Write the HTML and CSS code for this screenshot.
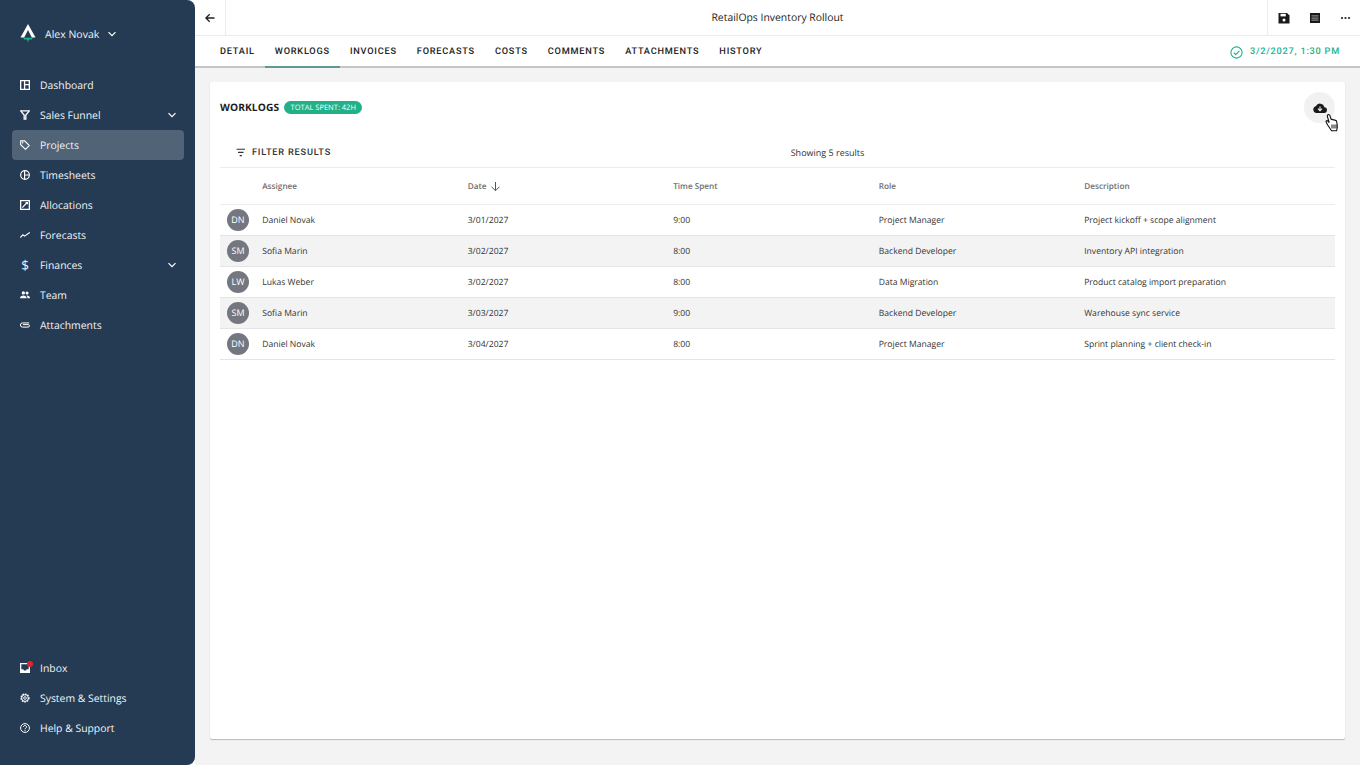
FILE: index.html
```html
<!DOCTYPE html>
<html lang="en">
<head>
<meta charset="utf-8">
<title>RetailOps Inventory Rollout</title>
<link rel="stylesheet" href="styles.css">
</head>
<body>
<div class="app">
  <aside class="sidebar">
    <div class="user">
      <svg class="logo" width="16" height="19" viewBox="0 0 16 19"><path d="M8 0 L15.500 13.500 L11.800 13.500 L8 6 L4.200 13.500 L.5 13.500 Z" fill="#fff"/><path d="M3 13.800 H13 L11.500 15.800 L10 15.200 L8.800 15.800 L8 18.500 L7.200 15.800 L6 15.200 L4.500 15.800 Z" fill="#1fb58a"/></svg>
      <span class="user-name">Alex Novak</span>
      <svg class="chev" width="12" height="12" viewBox="0 0 12 12"><path d="M2.500 4.200 L6 7.700 L9.500 4.200" fill="none" stroke="#fff" stroke-width="1.200"/></svg>
    </div>
    <nav class="nav">
      <a class="nav-item"><svg class="nav-icon" viewBox="0 0 12 12"><path d="M.8.8h10.400v10.400H.8zM5.500 1v10M5.500 5.500H11" fill="none" stroke="#fff" stroke-width="1.600"/></svg><span>Dashboard</span></a>
      <a class="nav-item"><svg class="nav-icon" viewBox="0 0 12 12"><path d="M.8 1h10.400L7 6v5H5V6z" fill="none" stroke="#fff" stroke-width="1.600"/></svg><span>Sales Funnel</span><svg class="nav-chev" width="12" height="12" viewBox="0 0 12 12"><path d="M2.500 4.200 L6 7.700 L9.500 4.200" fill="none" stroke="#fff" stroke-width="1.200"/></svg></a>
      <a class="nav-item active"><svg class="nav-icon" viewBox="0 0 12 12"><path d="M.8 1h4.800l5.600 5.600-4.600 4.600L.8 5.600z" fill="none" stroke="#fff" stroke-width="1.300"/><circle cx="3.200" cy="3.300" r=".9" fill="#fff"/></svg><span>Projects</span></a>
      <a class="nav-item"><svg class="nav-icon" viewBox="0 0 12 12"><circle cx="6" cy="6" r="5.200" fill="none" stroke="#fff" stroke-width="1.400"/><path d="M5.500 1v10M5.500 6H11" stroke="#fff" stroke-width="1.400"/></svg><span>Timesheets</span></a>
      <a class="nav-item"><svg class="nav-icon" viewBox="0 0 12 12"><path d="M.8.8h10.400v10.400H.8z" fill="none" stroke="#fff" stroke-width="1.500"/><path d="M2.800 9.200L8.500 3M6.700 3h2.200v2.200" fill="none" stroke="#fff" stroke-width="1.400"/></svg><span>Allocations</span></a>
      <a class="nav-item"><svg class="nav-icon" viewBox="0 0 12 12"><path d="M.3 9L3.500 5.800 5.500 7.300 11.700 3" fill="none" stroke="#fff" stroke-width="1.300"/></svg><span>Forecasts</span></a>
      <a class="nav-item"><span class="dollar">$</span><span>Finances</span><svg class="nav-chev" width="12" height="12" viewBox="0 0 12 12"><path d="M2.500 4.200 L6 7.700 L9.500 4.200" fill="none" stroke="#fff" stroke-width="1.200"/></svg></a>
      <a class="nav-item"><svg class="nav-icon" viewBox="0 0 12 12"><circle cx="4" cy="3.500" r="2" fill="#fff"/><circle cx="8.500" cy="3.500" r="1.800" fill="#fff"/><path d="M0 10c0-2.500 2-3.500 4-3.500s4 1 4 3.500zM9 10c0-1.400-.4-2.500-1.200-3.300 2.200-.3 4.200.8 4.200 3.300z" fill="#fff"/></svg><span>Team</span></a>
      <a class="nav-item"><svg class="nav-icon" viewBox="0 0 12 12"><path d="M11 3.500H3a2.400 2.400 0 0 0 0 5h6.800a1.500 1.500 0 0 0 0-3H3.500" fill="none" stroke="#fff" stroke-width="1.200"/></svg><span>Attachments</span></a>
    </nav>
    <nav class="nav nav-bottom">
      <a class="nav-item"><span class="inbox"><svg class="nav-icon" viewBox="0 0 12 12"><path d="M.8.8h10.400v10.400H.8z" fill="none" stroke="#fff" stroke-width="1.500"/><path d="M1 7.500h3c0 1 1 1.500 2 1.500s2-.5 2-1.500h3V11H1z" fill="#fff"/></svg><i class="dot"></i></span><span>Inbox</span></a>
      <a class="nav-item"><svg class="nav-icon" viewBox="0 0 12 12"><circle cx="6" cy="6" r="4.600" fill="none" stroke="#fff" stroke-width="1.800" stroke-dasharray="1.900 1.100"/><circle cx="6" cy="6" r="4" fill="none" stroke="#fff" stroke-width="1"/><circle cx="6" cy="6" r="1.600" fill="none" stroke="#fff" stroke-width="1.100"/></svg><span>System &amp; Settings</span></a>
      <a class="nav-item"><svg class="nav-icon" viewBox="0 0 12 12"><circle cx="6" cy="6" r="5.300" fill="none" stroke="#fff" stroke-width="1.200"/><path d="M4.200 4.700a1.800 1.800 0 1 1 2.800 1.500c-.7.400-1 .8-1 1.400" fill="none" stroke="#fff" stroke-width="1.200"/><circle cx="6" cy="9.100" r=".7" fill="#fff"/></svg><span>Help &amp; Support</span></a>
    </nav>
  </aside>
  <main class="main">
    <header class="topbar">
      <button class="back"><svg width="12" height="12" viewBox="0 0 12 12"><path d="M10.500 6H2M5.700 2.200L1.900 6l3.800 3.800" fill="none" stroke="#222" stroke-width="1.300"/></svg></button>
      <h1 class="title">RetailOps Inventory Rollout</h1>
      <div class="actions">
        <svg width="12" height="12" viewBox="0 0 12 12"><path d="M.5 1h8.500l2.500 2.500V11.500H.5z" fill="#1a1a1a"/><path d="M2.500 1.800h5.300v2.600H2.500z" fill="#fff"/><circle cx="6" cy="8" r="1.500" fill="#fff"/></svg>
        <svg width="12" height="12" viewBox="0 0 12 12"><path d="M1 1h10v10H1z" fill="#1a1a1a"/><path d="M2.500 3.300h7v1.300h-7zM2.500 5.400h7v1.300h-7zM2.500 7.500h7v1.300h-7z" fill="#888"/></svg>
        <svg width="12" height="12" viewBox="0 0 12 12"><circle cx="2" cy="6" r="1.100" fill="#222"/><circle cx="5.500" cy="6" r="1.100" fill="#222"/><circle cx="9" cy="6" r="1.100" fill="#222"/></svg>
      </div>
    </header>
    <div class="tabbar">
      <div class="tabs">
        <a class="tab">DETAIL</a>
        <a class="tab active">WORKLOGS</a>
        <a class="tab">INVOICES</a>
        <a class="tab">FORECASTS</a>
        <a class="tab">COSTS</a>
        <a class="tab">COMMENTS</a>
        <a class="tab">ATTACHMENTS</a>
        <a class="tab">HISTORY</a>
      </div>
      <div class="status">
        <svg width="13" height="13" viewBox="0 0 13 13"><circle cx="6.500" cy="6.500" r="5.600" fill="none" stroke="#22b088" stroke-width="1.100"/><path d="M3.800 6.700l2 2 3.600-3.900" fill="none" stroke="#22b088" stroke-width="1.100"/></svg>
        <span>3/2/2027, 1:30 PM</span>
      </div>
    </div>
    <div class="content">
      <section class="card">
        <div class="card-head">
          <h2 class="card-title">WORKLOGS</h2>
          <span class="badge">TOTAL SPENT: 42H</span>
          <span class="cloud-btn"><svg class="cloud" width="14" height="11" viewBox="0 0 14 11"><path d="M11.300 4.200A4.400 4.400 0 0 0 3 3.100 3.500 3.500 0 0 0 3.500 10h7.300a2.900 2.900 0 0 0 .5-5.800z" fill="#1a1a1a"/><path d="M7 3.500v3.500M5 5.700L7 7.800 9 5.700" fill="none" stroke="#f3f3f3" stroke-width="1.100"/></svg></span>
          <svg class="cursor" width="15" height="19" viewBox="0 0 15 19"><path d="M2.800 1.800c.9-.7 1.800 0 2.100.9l1.300 3.800c.8-.5 1.600-.3 1.900.4.700-.4 1.500-.2 1.800.5.700-.2 1.400.1 1.600.8.600 2 .9 4 .8 6.300l-.7 3.300H6.500L2.700 12 1 8.800c-.2-1 1-1.500 1.700-.8l1.500 1.700L2.400 3.500c-.2-.6 0-1.300.4-1.700z" fill="#fff" stroke="#111" stroke-width="1.100"/><path d="M7 11.500v4M9 11.500v4M11 11.500v4" stroke="#111" stroke-width="1"/></svg>
        </div>
        <div class="filter-row">
          <div class="filter"><svg width="12" height="9" viewBox="0 0 12 9"><path d="M1.500 1.200h8.500M3 4.400h5.500M4.700 7.600h2.200" stroke="#333" stroke-width="1.100"/></svg><span>FILTER RESULTS</span></div>
          <div class="results">Showing 5 results</div>
        </div>
        <div class="table">
          <div class="row head">
            <span></span><span>Assignee</span>
            <span class="date-h">Date <svg width="11" height="11" viewBox="0 0 11 11"><path d="M5.500 1v8.500M1.500 5.700l4 4 4-4" fill="none" stroke="#555" stroke-width="1"/></svg></span>
            <span>Time Spent</span><span>Role</span><span>Description</span>
          </div>
          <div class="row"><span class="avatar">DN</span><span>Daniel Novak</span><span>3/01/2027</span><span>9:00</span><span>Project Manager</span><span>Project kickoff + scope alignment</span></div>
          <div class="row alt"><span class="avatar">SM</span><span>Sofia Marin</span><span>3/02/2027</span><span>8:00</span><span>Backend Developer</span><span>Inventory API integration</span></div>
          <div class="row"><span class="avatar">LW</span><span>Lukas Weber</span><span>3/02/2027</span><span>8:00</span><span>Data Migration</span><span>Product catalog import preparation</span></div>
          <div class="row alt"><span class="avatar">SM</span><span>Sofia Marin</span><span>3/03/2027</span><span>9:00</span><span>Backend Developer</span><span>Warehouse sync service</span></div>
          <div class="row"><span class="avatar">DN</span><span>Daniel Novak</span><span>3/04/2027</span><span>8:00</span><span>Project Manager</span><span>Sprint planning + client check-in</span></div>
        </div>
      </section>
    </div>
  </main>
</div>
</body>
</html>
```
FILE: styles.css
```css
* { box-sizing: border-box; }
html, body { margin: 0; height: 100%; }
body { background: #fff; font-family: "Open Sans", sans-serif; color: #222; overflow: hidden; text-rendering: geometricPrecision; }
.app { display: flex; height: 765px; width: 1360px; }

.sidebar { width: 195px; flex: none; background: #253b54; border-radius: 0 8px 8px 0; display: flex; flex-direction: column; color: #fff; padding: 0 11px 22px 12px; }
.user { display: flex; align-items: center; height: 70px; padding-left: 8px; flex: none; }
.logo { flex: none; margin-top: -3px; }
.user-name { font-size: 10.500px; margin-left: 9px; color: #f0f3f5; font-weight: 500; }
.chev { margin: -2px 0 0 7px; }
.nav { display: flex; flex-direction: column; }
.nav-bottom { margin-top: auto; }
.nav-item { display: flex; align-items: center; height: 30px; padding: 1px 6px 0 8px; font-size: 10.400px; color: #f2f4f6; border-radius: 4px; gap: 10px; font-weight: 500; }
.nav-item.active { background: #516376; }
.nav-icon { width: 10px; height: 10px; flex: none; display: block; margin-top: -1px; }
.nav-chev { margin-left: auto; margin-top: -1px; }
.dollar { width: 10px; font-size: 13.500px; text-align: center; line-height: 1; }
.inbox { position: relative; display: block; width: 10px; height: 10px; }
.dot { position: absolute; top: -3px; right: -3px; width: 6px; height: 6px; border-radius: 50%; background: #e0262c; }

.main { flex: 1; min-width: 0; display: flex; flex-direction: column; }
.topbar { height: 36px; flex: none; display: flex; align-items: stretch; border-bottom: 1px solid #ececec; }
.back { width: 31px; border: 0; border-right: 1px solid #ececec; background: #fff; padding: 0; display: flex; align-items: center; justify-content: center; }
.title { flex: 1; margin: 0; font: 500 10.400px/37px "Open Sans", sans-serif; text-align: center; color: #222; padding-left: 62px; }
.actions { width: 93px; border-left: 1px solid #ececec; display: flex; align-items: center; gap: 19px; padding-left: 10px; }

.tabbar { height: 32px; flex: none; display: flex; align-items: stretch; justify-content: space-between; border-bottom: 2px solid #c4c6c6; padding: 0 20px 0 15px; }
.tabs { display: flex; margin-bottom: -2px; }
.tab { display: flex; align-items: center; padding: 2px 10px 0; font: 500 9.200px/1 Roboto, sans-serif; letter-spacing: .78px; color: #222; border-bottom: 2px solid transparent; }
.tab.active { border-bottom-color: #5f9b8f; }
.status { display: flex; align-items: center; gap: 7px; padding-top: 2px; font: 500 9.200px/1 Roboto, sans-serif; letter-spacing: .76px; color: #22b088; }

.content { flex: 1; min-height: 0; background: #f3f3f3; padding: 14px 15px 26px; }
.card { height: 100%; background: #fff; border-radius: 2px; box-shadow: 0 1px 1px #b8b8b8; padding: 10px; }
.card-head { display: flex; align-items: center; position: relative; height: 30px; margin-bottom: 16px; }
.card-title { margin: 0; font: 700 10.200px/1 "Open Sans", sans-serif; color: #1c1c1c; letter-spacing: .1px; }
.badge { margin-left: 5px; background: #22b088; color: #fff; font-size: 7.500px; font-weight: 500; border-radius: 7px; height: 13px; line-height: 14px; padding: 0 6.500px; }
.cloud-btn { margin-left: auto; width: 31px; height: 31px; border-radius: 50%; background: #f1f1f1; display: flex; align-items: center; justify-content: center; }
.cloud { margin: 2px 0 0; }
.cursor { position: absolute; right: -5px; top: 21px; }

.filter-row { height: 30px; display: flex; align-items: center; position: relative; border-bottom: 1px solid #ececec; }
.filter { display: flex; align-items: center; gap: 5px; padding: 1px 0 0 15px; font: 500 9.200px/1 Roboto, sans-serif; letter-spacing: .8px; color: #333; }
.results { position: absolute; left: 100px; right: 0; text-align: center; font-size: 9px; color: #333; }

.row { display: grid; grid-template-columns: 42.200px repeat(4, 205.500px) 1fr; align-items: center; height: 31px; padding-bottom: 1px; border-bottom: 1px solid #e4e4e4; font-size: 8.600px; color: #333; }
.row.alt { background: #f3f3f3; }
.row.head { height: 37px; padding-bottom: 0; color: #6e6e6e; font-weight: 600; font-size: 8.200px; border-bottom-color: #ececec; }
.date-h { display: flex; align-items: center; gap: 4px; }
.avatar { width: 22px; height: 22px; margin-left: 7px; border-radius: 50%; background: #74777f; color: #fff; font-size: 9px; display: flex; align-items: center; justify-content: center; }
```
